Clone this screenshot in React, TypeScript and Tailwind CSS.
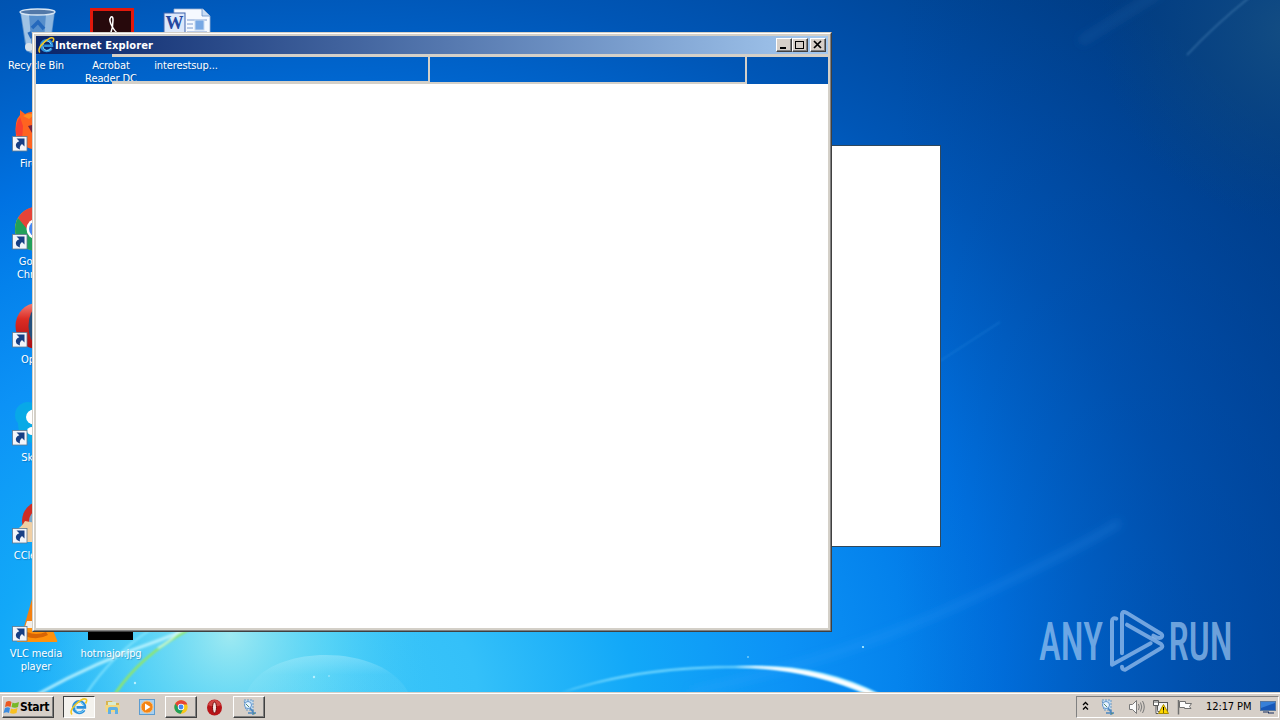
import type { ReactNode } from "react";
import clsx from "clsx";

const raised =
    "bg-[#d6cfc8] border border-t-white border-l-white border-r-[#404040] border-b-[#404040] shadow-[inset_-1px_-1px_0_#808080]";

const Wallpaper = () => (
    <svg className="absolute inset-0" width="1280" height="720" viewBox="0 0 1280 720">
        <defs>
            <radialGradient
                id="sky"
                gradientUnits="userSpaceOnUse"
                cx="0"
                cy="0"
                r="1200"
                gradientTransform="translate(310 700) scale(1 .8)"
            >
                <stop offset="0" stopColor="#3cc8f8" />
                <stop offset=".14" stopColor="#34c0f9" />
                <stop offset=".27" stopColor="#12a8f8" />
                <stop offset=".4" stopColor="#0c92f6" />
                <stop offset=".5" stopColor="#0482ec" />
                <stop offset=".58" stopColor="#0072e2" />
                <stop offset=".66" stopColor="#0064cc" />
                <stop offset=".75" stopColor="#0056b6" />
                <stop offset=".84" stopColor="#004ca4" />
                <stop offset="1" stopColor="#003c80" />
            </radialGradient>
            <radialGradient id="glow" gradientUnits="userSpaceOnUse" cx="230" cy="635" r="200">
                <stop offset="0" stopColor="#b0f0f0" stopOpacity=".85" />
                <stop offset=".5" stopColor="#70e0f4" stopOpacity=".5" />
                <stop offset="1" stopColor="#40c8f8" stopOpacity="0" />
            </radialGradient>
            <radialGradient id="corner" gradientUnits="userSpaceOnUse" cx="1290" cy="30" r="190">
                <stop offset="0" stopColor="#205880" stopOpacity=".6" />
                <stop offset="1" stopColor="#104878" stopOpacity="0" />
            </radialGradient>
            <linearGradient id="side" x1="0" x2="1" y1="0" y2="0">
                <stop offset=".7" stopColor="#003c90" stopOpacity="0" />
                <stop offset="1" stopColor="#003c90" stopOpacity=".4" />
            </linearGradient>
            <linearGradient id="dome" x1="0" x2="0" y1="0" y2="1">
                <stop offset="0" stopColor="#c8f4ff" stopOpacity=".35" />
                <stop offset=".5" stopColor="#c8f4ff" stopOpacity=".08" />
            </linearGradient>
            <filter id="soft1">
                <feGaussianBlur stdDeviation=".8" />
            </filter>
            <filter id="soft4" x="-20%" y="-50%" width="140%" height="200%">
                <feGaussianBlur stdDeviation="4" />
            </filter>
        </defs>
        <rect width="1280" height="720" fill="url(#sky)" />
        <rect width="1280" height="720" fill="url(#side)" />
        <rect width="1280" height="720" fill="url(#glow)" />
        <rect width="1280" height="720" fill="url(#corner)" />
        <g fill="none" filter="url(#soft4)">
            <path d="M690 692Q840 660 960 604T1120 522" stroke="#48a8ff" strokeOpacity=".2" strokeWidth="7" />
            <path d="M1080 42L1160 -8" stroke="#3878b8" strokeOpacity=".22" strokeWidth="8" />
        </g>
        <g fill="none" filter="url(#soft1)">
            <path d="M1187 55Q1215 25 1250 -3" stroke="#4c86b8" strokeOpacity=".6" strokeWidth="1.5" />
            <path d="M940 361L1000 322" stroke="#3898e8" strokeOpacity=".25" strokeWidth="1.5" />
            <path d="M38 694Q95 662 160 640L205 622" stroke="#c8f8ff" strokeOpacity=".8" strokeWidth="3" />
            <path d="M86 694Q112 655 150 630" stroke="#8ce8ff" strokeOpacity=".8" strokeWidth="2" />
            <path d="M115 694Q140 656 188 630" stroke="#94e860" strokeWidth="2.5" />
            <path d="M158 648Q170 642 180 630" stroke="#e4fff8" strokeOpacity=".7" strokeWidth="2" />
        </g>
        <path d="M246 694C265 642 385 642 409 694Z" fill="url(#dome)" />
        <path
            d="M560 693C630 668 690 666 750 666Q825 664 882 695L868 695Q810 669 750 668C690 667 630 672 560 693Z"
            fill="#7cdcff"
            filter="url(#soft1)"
        />
        <path d="M735 667Q812 662 880 695L869 695Q810 669 735 667Z" fill="#fff" filter="url(#soft1)" />
        <g fill="#b8f0ff">
            <circle cx="135" cy="683" r="1.2" />
            <circle cx="314" cy="677" r="1.2" />
            <circle cx="329" cy="676" r=".8" />
            <circle cx="748" cy="657" r=".8" />
            <circle cx="863" cy="647" r="1.1" />
        </g>
    </svg>
);

const Shortcut = () => (
    <g>
        <rect x=".500" y="30.500" width="14.500" height="14.500" fill="#f2f5fa" stroke="#607890" strokeWidth=".8" />
        <path d="M4.500 32.500H12.500V40.500L10 38Q7 40.500 8 43.500Q3 42 4 38Q5 36 7.300 35.300Z" fill="#173f84" />
    </g>
);

const RecycleBin = () => (
    <g>
        <path d="M8 3H43L38 42Q25 50 14 43Z" fill="#6c9cd0" fillOpacity=".8" />
        <path d="M9 5L15 42L20 45L17 6Z" fill="#dcecfa" fillOpacity=".55" />
        <path d="M34 6L31 45L37 42L42 6Z" fill="#c4ddf4" fillOpacity=".5" />
        <ellipse cx="25.500" cy="4" rx="17.500" ry="3" fill="#5278a8" stroke="#d8e6f4" strokeWidth="1.3" />
        <path d="M20 20L26 14L32 21M32 26L29 33H23M20 30L17 24" fill="none" stroke="#2468bc" strokeWidth="3.500" />
        <circle cx="17" cy="39" r="4" fill="#d8e2ea" />
    </g>
);

const Acrobat = () => (
    <g>
        <rect x="4.500" y="1.500" width="41" height="41" fill="#27090c" stroke="#e2180c" strokeWidth="3" />
        <path
            d="M17 34Q26 27 26 12Q26 8 24 9Q21 12 26 20Q30 27 37 27Q24 24 17 34"
            fill="none"
            stroke="#fff"
            strokeWidth="1.500"
        />
    </g>
);

const WordDoc = () => (
    <g>
        <path d="M12 1H41L48 8V45H12Z" fill="#f5f9ff" stroke="#9ab0d0" strokeWidth=".8" />
        <path d="M40 1V8H48" fill="#c8dcf4" stroke="#6490c8" strokeWidth=".8" />
        <path d="M25 12H45M25 16H31M25 20H31M25 24H45" stroke="#7c9cd0" />
        <rect x="33" y="12" width="9" height="10" fill="#78a8e4" stroke="#c8daf0" />
        <rect x="2" y="5" width="21" height="20" fill="#dce8fb" stroke="#3c62ac" />
        <text x="3.500" y="21" fontFamily="Liberation Serif, serif" fontSize="18" fontWeight="bold" fill="#2448a0">
            W
        </text>
    </g>
);

const Firefox = () => (
    <g>
        <path d="M4 30Q2 15 8 9V4L13 8Q20 4 24 8L34 3V44Q12 46 4 30" fill="#ff6420" />
        <path d="M4 28Q3 18 8 11L11 20L10 35Z" fill="#f84030" />
        <path d="M16 20L20 19L22 22L30 18V29L20 27Z" fill="#702444" />
        <path d="M11 10Q18 6 22 9L17 13Z" fill="#ff8c20" />
    </g>
);

const Chrome = () => (
    <g>
        <circle cx="25" cy="25" r="22" fill="#f8c818" />
        <path d="M6 14A22 22 0 0 1 46 17H25L16 30Z" fill="#e54438" />
        <path d="M6 14A22 22 0 0 0 24 47L33 31L25 25H15Z" fill="#21a05a" />
        <circle cx="25" cy="25" r="10.500" fill="#fff" />
        <circle cx="25" cy="25" r="8" fill="#4688f0" />
    </g>
);

const Opera = () => (
    <g>
        <ellipse cx="25" cy="24" rx="21.500" ry="23" fill="url(#operaRed)" />
        <ellipse cx="25" cy="24" rx="8.500" ry="18" fill="#24507c" />
    </g>
);

const Skype = () => (
    <g>
        <circle cx="16" cy="15" r="13" fill="#08a8e8" />
        <circle cx="26" cy="24" r="20" fill="#08aae6" />
        <ellipse cx="22" cy="17" rx="8" ry="7.500" fill="#fff" />
        <ellipse cx="20" cy="31" rx="5" ry="4" fill="#fff" />
    </g>
);

const CCleaner = () => (
    <g>
        <circle cx="30" cy="23" r="20" fill="#d02c24" />
        <circle cx="31" cy="24" r="14" fill="#78a8cc" />
        <path d="M2 33Q10 29 13 23L34 27V44H8Z" fill="#f0cfa4" />
    </g>
);

const Vlc = () => (
    <g>
        <path d="M20 3H30L40 38H10Z" fill="#f48010" />
        <path d="M15 25H35L38 34Q24 40 12 34Z" fill="#f2eee8" />
        <path d="M8 32H40L45 44Q46 46 44 46H5Z" fill="#ff920c" />
        <path d="M13 40Q25 45 36 39L34 36Q24 40 15 36Z" fill="#d86404" />
    </g>
);

type DesktopItem = { label: string; icon: ReactNode; shortcut?: boolean };

const firstColumn: DesktopItem[] = [
    { label: "Recycle Bin", icon: <RecycleBin /> },
    { label: "Firefox", icon: <Firefox />, shortcut: true },
    { label: "Google Chrome", icon: <Chrome />, shortcut: true },
    { label: "Opera", icon: <Opera />, shortcut: true },
    { label: "Skype", icon: <Skype />, shortcut: true },
    { label: "CCleaner", icon: <CCleaner />, shortcut: true },
    { label: "VLC media player", icon: <Vlc />, shortcut: true },
];

const DesktopIcon = ({ label, icon, shortcut }: DesktopItem) => (
    <div className="h-[98px] w-[75px] pt-[8px] flex flex-col items-center">
        <svg className="shrink-0" width="50" height="48" viewBox="0 0 50 48">
            {icon}
            {shortcut && <Shortcut />}
        </svg>
        <span className="mt-[3px] w-[72px] -ml-px text-center text-[11px] leading-[13px] tracking-[-0.1px] text-white [text-shadow:1px_1px_1px_#00306050]">
            {label}
        </span>
    </div>
);

const Desktop = () => (
    <div className="absolute top-0 -left-px flex">
        <svg className="absolute" width="0" height="0">
            <linearGradient id="operaRed" x1="0" x2="0" y1="0" y2="1">
                <stop offset="0" stopColor="#f08078" />
                <stop offset=".35" stopColor="#dc2c24" />
                <stop offset="1" stopColor="#a80c10" />
            </linearGradient>
        </svg>
        <div className="flex flex-col">
            {firstColumn.map((item) => (
                <DesktopIcon key={item.label} {...item} />
            ))}
        </div>
        <div className="flex flex-col justify-between">
            <DesktopIcon label="Acrobat Reader DC" icon={<Acrobat />} />
            <DesktopIcon label="hotmajor.jpg" icon={<rect x="1" y="4" width="45" height="40" fill="#000" />} />
        </div>
        <DesktopIcon label="interestsup..." icon={<WordDoc />} />
    </div>
);

const IeLogo = ({ size }: { size: number }) => (
    <svg width={size} height={size} viewBox="0 0 18 18" className="shrink-0">
        <path
            d="M14.200 12Q12.500 14.800 9 14.800A5.700 5.700 0 1 1 14.800 9.300H6.500"
            fill="none"
            stroke="#2c90dc"
            strokeWidth="2.800"
        />
        <path d="M14 12Q12 14.500 9 14.500A5.500 5.500 0 0 1 9 4Q12.500 4 14 8" fill="none" stroke="#88d8fc" />
        <path d="M2 16.500Q-1 13 5.500 6.500Q13 -.5 16 1.200Q17.500 2.200 15.500 5.500" fill="none" stroke="#f4c820" strokeWidth="1.600" />
    </svg>
);

const CaptionButton = ({ children }: { children: ReactNode }) => (
    <div className={clsx("w-4 h-[14px]", raised)}>
        <svg width="14" height="12" viewBox="0 0 14 12" fill="none" stroke="#000" shapeRendering="crispEdges">
            {children}
        </svg>
    </div>
);

const IeWindow = () => (
    <div className="absolute left-8 top-8 w-[800px] h-[600px] flex flex-col border border-t-[#d4d0c8] border-l-[#d4d0c8] border-r-[#404040] border-b-[#404040]">
        <div className="flex-1 flex flex-col border border-t-white border-l-white border-r-[#808080] border-b-[#808080]">
            <div className="flex-1 flex flex-col border-2 border-[#d4d0c8]">
                <div className="h-[18px] flex items-center pl-[2px] pr-[2px] bg-linear-to-r from-[#0a246a] to-[#a6caf0]">
                    <IeLogo size={17} />
                    <span className="grow pt-px text-[11px] font-bold leading-[16px] tracking-[0.13px] text-white">
                        Internet Explorer
                    </span>
                    <CaptionButton>
                        <path d="M3 9H9" strokeWidth="2" />
                    </CaptionButton>
                    <CaptionButton>
                        <path d="M2.500 2.500H10.500V9.500H2.500ZM2 2H11" />
                    </CaptionButton>
                    <div className="w-[2px]" />
                    <CaptionButton>
                        <path d="M3 2L10 9M10 2L3 9" strokeWidth="1.700" shapeRendering="auto" />
                    </CaptionButton>
                </div>
                <div className="h-[30px] flex">
                    <div className="w-[76px]" />
                    <div className="w-[316px] border-t-[3px] border-b-[3px] border-[#d4d0c8]" />
                    <div className="w-[319px] border-t-[3px] border-b-2 border-x-2 border-[#d4d0c8]" />
                    <div className="flex-1 border-t-[3px] border-[#d4d0c8]" />
                </div>
                <div className="flex-1 bg-white" />
            </div>
        </div>
    </div>
);

const Watermark = () => (
    <svg className="absolute left-[1030px] top-[600px]" width="250" height="80" viewBox="0 0 250 80">
        <g fill="#a5cdf5" fillOpacity=".68" fontFamily="Roboto, sans-serif" fontSize="53" fontWeight="500">
            <text x="9" y="60" textLength="64" lengthAdjust="spacingAndGlyphs">
                ANY
            </text>
            <text x="138.500" y="60" textLength="64" lengthAdjust="spacingAndGlyphs">
                RUN
            </text>
        </g>
        <g
            transform="translate(70 4) scale(.3333)"
            fill="none"
            stroke="#9cc4f0"
            strokeOpacity=".72"
            strokeWidth="12"
            strokeLinecap="round"
            strokeLinejoin="round"
        >
            <path d="M49 44Q36 40 36 52V182L152 118" />
            <path d="M66 148V30Q68 20 79 26L184 90Q190 96 183 101Q175 104 160 95" />
            <path d="M81 62L184 121Q190 127 184 132L76 197Q66 198 66 188" />
        </g>
    </svg>
);

const TaskItem = ({ children, active, open }: { children: ReactNode; active?: boolean; open?: boolean }) => (
    <div
        className={clsx(
            "w-8 h-[22px] flex items-center justify-center",
            open && raised,
            active && "bg-[#f4f2ee] border border-t-[#404040] border-l-[#404040] border-r-white border-b-white",
        )}
    >
        {children}
    </div>
);

const AppDoc = () => (
    <svg width="17" height="17" viewBox="0 0 17 17" fill="none">
        <path d="M3 1H12V11H5Z" fill="#c4dcf0" stroke="#6898c4" strokeDasharray="2 1" />
        <circle cx="7" cy="6" r="3.500" fill="#e8f4ff" stroke="#6094cc" />
        <path d="M9 9L12 13M7 14H15M12 11V16" stroke="#4c88c0" strokeWidth="1.500" />
        <path d="M5 5L8 8M12 14L14 15" stroke="#588c70" />
    </svg>
);

const Taskbar = () => (
    <div className="absolute bottom-0 left-0 w-full h-7 bg-[#d6cfc8] border-t border-[#d4d0c8] shadow-[inset_0_1px_0_#fff] flex items-start pt-[3px] pl-[2px]">
        <div className={clsx("w-[52px] h-[22px] flex items-center", raised)}>
            <svg width="17" height="17" viewBox="0 0 17 17" className="shrink-0">
                <path d="M3 3Q6 1 8.500 3L7.500 8Q5 6.500 2 8Z" fill="#ec5820" />
                <path d="M9.500 3.500Q12 5 16 3L15 8Q12 9.500 8.500 8Z" fill="#78b828" />
                <path d="M2 9Q5 7.500 7 9L6 14Q4 12.500 .5 14Z" fill="#3c8ce0" />
                <path d="M8 9.500Q11 11 14.500 9L13.500 14Q10 15.500 7 14Z" fill="#f8c020" />
            </svg>
            <span className="text-[12px] font-bold text-black leading-[16px] tracking-[-0.3px]">Start</span>
        </div>
        <div className="ml-[9px] flex gap-[2px]">
            <TaskItem active>
                <IeLogo size={18} />
            </TaskItem>
            <TaskItem>
                <svg width="18" height="18" viewBox="0 0 18 18">
                    <path d="M2 3H8L9 5H15V14H2Z" fill="#d8b450" />
                    <path d="M4 4H12V8H4Z" fill="#d8ecd0" />
                    <path d="M1 7H16L15 14H2Z" fill="#f4d880" />
                    <path d="M4 16V11Q4 9 6 9H12Q14 9 14 11V16H11V12H7V16Z" fill="#60b0e4" />
                </svg>
            </TaskItem>
            <TaskItem>
                <svg width="18" height="18" viewBox="0 0 18 18">
                    <rect x="1.500" y="1.500" width="15" height="15" fill="#a8d0f0" stroke="#5c9cd0" />
                    <circle cx="9" cy="9" r="6" fill="#f48414" stroke="#fcc078" />
                    <path d="M7 5.500L12.500 9L7 12.500Z" fill="#fff" />
                </svg>
            </TaskItem>
            <TaskItem open>
                <svg width="14" height="14" viewBox="2 2 46 46">
                    <Chrome />
                </svg>
            </TaskItem>
            <TaskItem>
                <svg width="17" height="17" viewBox="0 0 17 17" className="-ml-px">
                    <ellipse cx="8.500" cy="8.500" rx="7.500" ry="8" fill="#b81418" />
                    <path d="M2 6Q4 1 8.500 1T15 6Q9 9 2 6" fill="#e06860" fillOpacity=".6" />
                    <ellipse cx="8.500" cy="8.500" rx="2" ry="5.500" fill="#f4e4e0" stroke="#740808" />
                </svg>
            </TaskItem>
            <TaskItem open>
                <AppDoc />
            </TaskItem>
        </div>
        <div className="ml-auto mr-px w-[203px] h-[22px] flex items-center border border-t-[#808080] border-l-[#808080] border-r-white border-b-white text-black">
            <svg className="ml-[5px] -mt-[2px]" width="7" height="10" viewBox="0 0 7 10" fill="none" stroke="#000" strokeWidth="1.300">
                <path d="M1 4L3.500 1.500L6 4M1 8.500L3.500 6L6 8.500" />
            </svg>
            <div className="ml-[10px]">
                <AppDoc />
            </div>
            <svg className="ml-[12px]" width="18" height="16" viewBox="0 0 18 16" fill="none" stroke="#787878">
                <path d="M1.500 5.500H4.500L8.500 1.500V14.500L4.500 10.500H1.500Z" fill="#fafafa" />
                <path d="M10.500 5Q12 8 10.500 11M12.500 3.500Q15 8 12.500 12.500M14.500 2Q18 8 14.500 14" />
            </svg>
            <svg className="ml-[6px]" width="18" height="16" viewBox="0 0 18 16" fill="none" stroke="#585858">
                <rect x="5.500" y="3.500" width="10" height="9" fill="#f4f4f4" />
                <path d="M1.500 1.500H6.500V6.500H1.500ZM4 6.500V14.500H6M3 1V4M5 1V4" fill="#fff" />
                <path d="M11.500 5.500L16.500 14.500H6.500Z" fill="#ffd800" stroke="#a88c00" />
                <path d="M11.500 8V11.500M11.500 12.500V13.500" stroke="#000" />
            </svg>
            <svg className="ml-[6px]" width="17" height="16" viewBox="0 0 17 16" stroke="#707070">
                <path d="M2.500 1V15.500" strokeWidth="1.500" />
                <path d="M3.500 2.500H9.500V4.500H15.500L13.500 7.500L15 9.500H8.500V8.500H3.500Z" fill="#fcfcfc" />
            </svg>
            <span className="ml-[13px] pt-px w-[46px] whitespace-nowrap text-[11px] tracking-[-0.1px]">12:17 PM</span>
            <svg className="ml-[8px] shrink-0" width="16" height="15" viewBox="0 0 16 15">
                <rect x=".5" y="1.500" width="15" height="9" fill="#1858b8" stroke="#5878a0" />
                <path d="M1 8L15 3V2H1Z" fill="#3880d8" />
                <path d="M3 12H9M8 13H14" stroke="#183060" strokeWidth="1.200" />
            </svg>
        </div>
    </div>
);

const App = () => {
    return (
        <div className="relative w-[1280px] h-[720px] overflow-hidden bg-[#0078e8] font-['DejaVu_Sans_Condensed','DejaVu_Sans',sans-serif] [font-stretch:condensed]">
            <Wallpaper />
            <Desktop />
            <div className="absolute left-[540px] top-[145px] w-[401px] h-[402px] bg-white border border-[#30485c]" />
            <IeWindow />
            <Watermark />
            <Taskbar />
        </div>
    );
};

export default App;
